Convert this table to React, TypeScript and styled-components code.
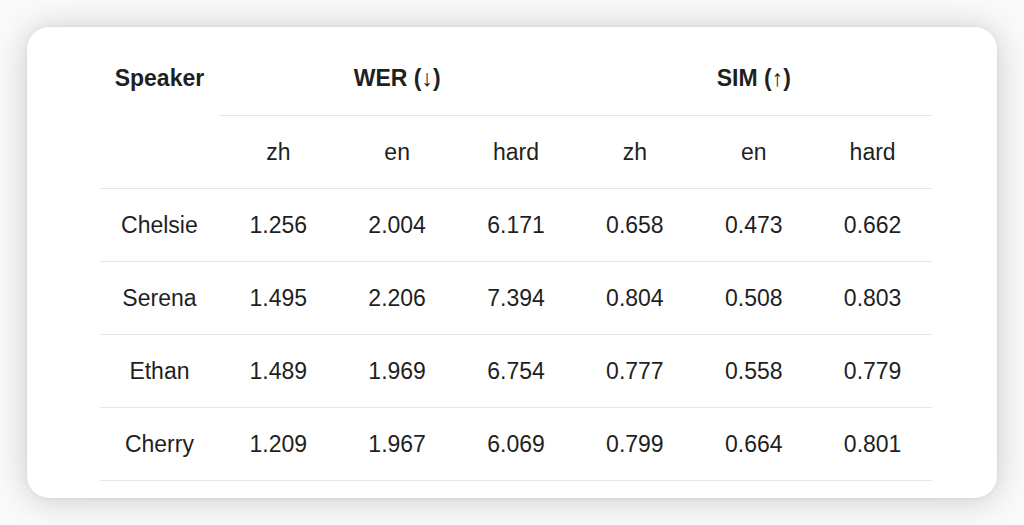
import React from "react";
import styled, { createGlobalStyle } from "styled-components";

const Global = createGlobalStyle`
  html, body { margin: 0; padding: 0; background: #ffffff; }
  body { font-family: "Liberation Sans", Arial, Helvetica, sans-serif; }
`;

const Page = styled.div`
  width: 1024px;
  height: 525px;
  box-sizing: border-box;
  padding: 27px 27px 27px 27px;
  background: #fafafa;
`;

const Card = styled.div`
  width: 970px;
  height: 471px;
  box-sizing: border-box;
  background: #ffffff;
  border-radius: 22px;
  box-shadow: 0 2px 34px rgba(0, 0, 0, 0.2), 0 0 4px rgba(0, 0, 0, 0.06);
  padding: 15px 65px 0 73px;
`;

const Table = styled.table`
  width: 832px;
  border-collapse: collapse;
  table-layout: fixed;
  color: #1f1f1f;
  font-size: 23px;
`;

const Col = styled.col`
  width: 118.86px;
`;

const HeadCell = styled.th<{ $line?: boolean; $top?: boolean }>`
  height: 73px;
  padding: 0;
  font-weight: 700;
  text-align: center;
  vertical-align: ${(p) => (p.$top ? "top" : "middle")};
  border-bottom: ${(p) => (p.$line ? "1px solid #e6e6e6" : "none")};
`;

const TopLabel = styled.div`
  height: 73px;
  line-height: 73px;
`;

const Arrow = styled.span`
  font-weight: 400;
  font-family: "Liberation Sans", Arial, sans-serif;
  font-size: 23px;
`;

const SubCell = styled.th`
  height: 72px;
  padding: 0;
  font-weight: 400;
  text-align: center;
  vertical-align: middle;
  border-bottom: 1px solid #e6e6e6;
`;

const Cell = styled.td`
  height: 72px;
  padding: 0;
  text-align: center;
  vertical-align: middle;
  border-bottom: 1px solid #e6e6e6;
`;

const rows: [string, string[]][] = [
  ["Chelsie", ["1.256", "2.004", "6.171", "0.658", "0.473", "0.662"]],
  ["Serena", ["1.495", "2.206", "7.394", "0.804", "0.508", "0.803"]],
  ["Ethan", ["1.489", "1.969", "6.754", "0.777", "0.558", "0.779"]],
  ["Cherry", ["1.209", "1.967", "6.069", "0.799", "0.664", "0.801"]],
];

const subs = ["zh", "en", "hard", "zh", "en", "hard"];

export default function App() {
  return (
    <>
      <Global />
      <Page>
        <Card>
          <Table>
            <colgroup>
              {Array.from({ length: 7 }).map((_, i) => (
                <Col key={i} />
              ))}
            </colgroup>
            <thead>
              <tr>
                <HeadCell rowSpan={2} $top $line>
                  <TopLabel>Speaker</TopLabel>
                </HeadCell>
                <HeadCell colSpan={3} $line>
                  WER (<Arrow>↓</Arrow>)
                </HeadCell>
                <HeadCell colSpan={3} $line>
                  SIM (<Arrow>↑</Arrow>)
                </HeadCell>
              </tr>
              <tr>
                {subs.map((s, i) => (
                  <SubCell key={i}>{s}</SubCell>
                ))}
              </tr>
            </thead>
            <tbody>
              {rows.map(([name, vals]) => (
                <tr key={name}>
                  <Cell>{name}</Cell>
                  {vals.map((v, i) => (
                    <Cell key={i}>{v}</Cell>
                  ))}
                </tr>
              ))}
            </tbody>
          </Table>
        </Card>
      </Page>
    </>
  );
}
